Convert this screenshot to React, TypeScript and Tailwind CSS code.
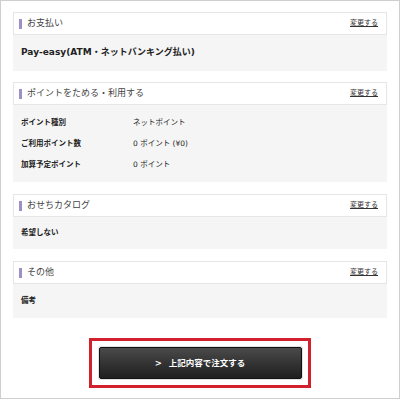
import React from "react";

const FONT = "font-['DejaVu_Sans','Noto_Sans_CJK_JP',sans-serif]";

interface SectionProps {
  title: string;
  bodyClass: string;
  children: React.ReactNode;
}

function Section({ title, bodyClass, children }: SectionProps) {
  return (
    <div className="w-[374px]">
      <div className="flex h-[23px] items-center justify-between border border-[#e6e6e6] bg-white pl-[5px] pr-[8px]">
        <div className="flex items-center gap-[5px]">
          <span className="block h-[10px] w-[3px] bg-[#9d90c9]" />
          <span className="text-[9px] leading-none text-[#444]">{title}</span>
        </div>
        <a className="text-[7px] leading-none text-[#333] underline">変更する</a>
      </div>
      <div className={`bg-[#f5f5f5] px-[8px] ${bodyClass}`}>{children}</div>
    </div>
  );
}

const POINT_ROWS = [
  { label: "ポイント種別", value: "ネットポイント" },
  { label: "ご利用ポイント数", value: "0 ポイント (¥0)" },
  { label: "加算予定ポイント", value: "0 ポイント" },
];

export default function App() {
  return (
    <div
      className={`${FONT} flex h-[399px] w-[400px] flex-col items-center border border-[#cfcfcf] bg-white pt-[11px]`}
    >
      <div className="flex flex-col gap-[11px]">
        <Section title="お支払い" bodyClass="flex h-[36px] items-center">
          <span className="text-[9px] font-bold text-[#222]">
            Pay-easy(ATM・ネットバンキング払い)
          </span>
        </Section>

        <Section title="ポイントをためる・利用する" bodyClass="py-[7px]">
          {POINT_ROWS.map((row) => (
            <div key={row.label} className="flex h-[21px] items-center text-[7.5px] text-[#222]">
              <span className="w-[112px] font-bold">{row.label}</span>
              <span>{row.value}</span>
            </div>
          ))}
        </Section>

        <div className="mt-[1px]">
          <Section title="おせちカタログ" bodyClass="flex h-[32px] items-center">
            <span className="text-[7.5px] font-bold text-[#222]">希望しない</span>
          </Section>
        </div>

        <div className="mt-[1px]">
          <Section title="その他" bodyClass="flex h-[34px] items-center">
            <span className="text-[7.5px] font-bold text-[#222]">備考</span>
          </Section>
        </div>
      </div>

      <div className="mt-[20px] flex h-[50px] w-[222px] items-center justify-center border-[3px] border-[#d3202f]">
        <button className="flex h-[32px] w-[203px] items-center justify-center gap-[7px] rounded-[2px] border border-[#111] bg-gradient-to-b from-[#4a4a4a] to-[#1f1f1f] text-[8.5px] font-bold text-white shadow-[0_0_0_1px_#e2e2e2]">
          <span>&gt;</span>
          <span>上記内容で注文する</span>
        </button>
      </div>
    </div>
  );
}
